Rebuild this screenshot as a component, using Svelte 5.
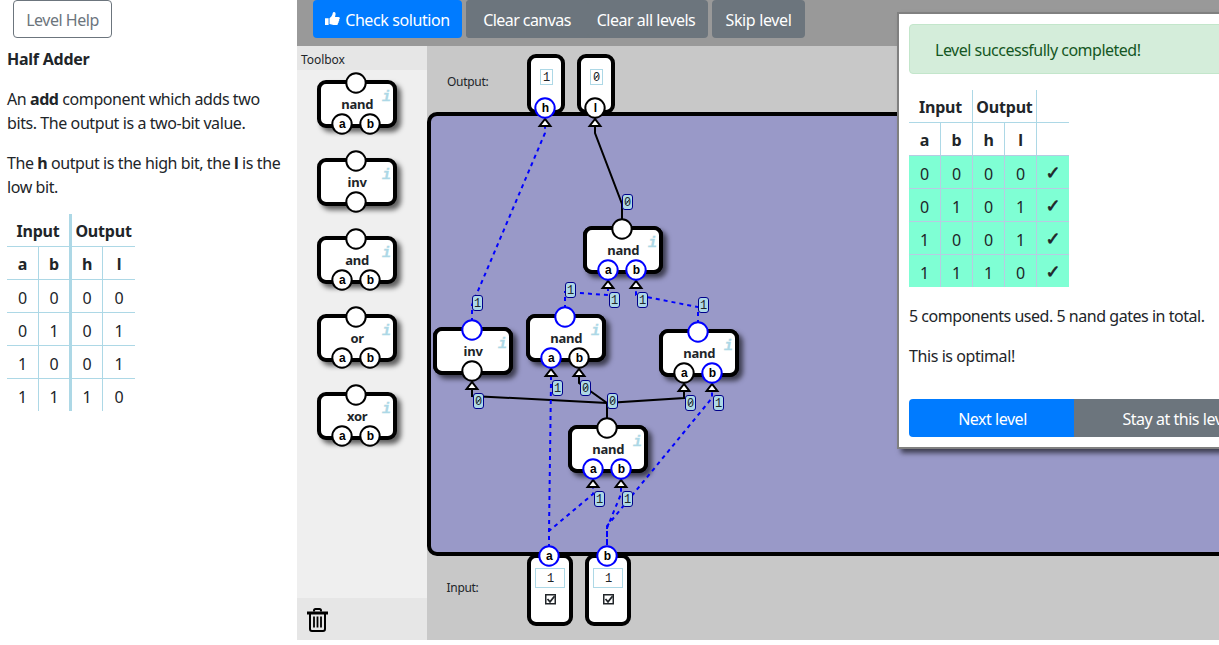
<script>
  const truth = [
    [0, 0, 0, 0],
    [0, 1, 0, 1],
    [1, 0, 0, 1],
    [1, 1, 1, 0]
  ];
  const tools = ['nand', 'inv', 'and', 'or', 'xor'];

  // Free canvas items, in the coordinate system of the canvas viewBox.
  const nodes = [
    { name: 'inv', x: 433, y: 327, out: 1, ins: [0] },
    { name: 'nand', x: 526, y: 314, out: 1, ins: [1, 0] },
    { name: 'nand', x: 583, y: 226, out: 0, ins: [1, 1] },
    { name: 'nand', x: 659, y: 329, out: 1, ins: [0, 1] },
    { name: 'nand', x: 568, y: 425, out: 0, ins: [1, 1] }
  ];
  const wires = [
    { from: [472, 330], to: [545, 108], v: 1, src: true },
    { from: [622, 229], to: [595, 108], v: 0, src: true },
    { from: [565, 317], to: [608, 270], v: 1, src: true, dst: true },
    { from: [698, 332], to: [636, 270], v: 1, src: true, dst: true },
    { from: [607, 428], to: [472, 371], v: 0, dst: true },
    { from: [607, 428], to: [579, 358], v: 0, dst: true },
    { from: [607, 428], to: [684, 373], v: 0, src: true, dst: true },
    { from: [549, 556], to: [551, 358], v: 1, dst: true },
    { from: [549, 556], to: [593, 469], v: 1, dst: true },
    { from: [607, 553], to: [621, 469], v: 1, dst: true },
    { from: [607, 551], to: [712, 373], v: 1, dst: true }
  ];
  const outputs = [{ n: 'h', x: 527, v: 1 }, { n: 'l', x: 577, v: 0 }];
  const inputs = [{ n: 'a', x: 527 }, { n: 'b', x: 585 }];
</script>

{#snippet pin(x, y, label, on)}
  <circle class="pin" class:on cx={x} cy={y} r="9.7" />
  {#if label}<text class="pinlabel" x={x + 0.3} y={y + 4}>{label}</text>{/if}
{/snippet}

{#snippet gate(name, x, y, out, ins)}
  <g transform="translate({x} {y})">
    <rect class="body" x="2" y="2" width="76" height="44" rx="7" />
    <text class="name" x="40.2" y="29">{name}</text>
    <text class="info" x="69.5" y="21">i</text>
    {@render pin(39, 3, '', out)}
    {#if ins.length === 1}
      {@render pin(39, 44, '', ins[0])}
    {:else}
      {@render pin(25, 44, 'a', ins[0])}
      {@render pin(53, 44, 'b', ins[1])}
    {/if}
  </g>
{/snippet}

{#snippet digit(x, y, v)}
  <text class="mono" {x} {y}>{v}</text>
  {#if v === 0}<path class="slash" d="M{x - 1.8} {y - 1.7}l3.600-4.800" />{/if}
{/snippet}

{#snippet badge(x, y, v)}
  <rect class="badge" x={x + 0.5} y={y + 0.5} width="10" height="15" rx="2.5" />
  {@render digit(x + 5.5, y + 12, v)}
{/snippet}

<div class="app">
  <aside class="help">
    <button class="outline">Level Help</button>
    <h1>Half Adder</h1>
    <p>An <b>add</b> component which adds two<br />bits. The output is a two-bit value.</p>
    <p>The <b>h</b> output is the high bit, the <b>l</b> is the<br />low bit.</p>
    <table class="truth">
      <colgroup><col style="width:32px" /><col style="width:33px" /><col style="width:31px" /><col style="width:32px" /></colgroup>
      <tbody>
        <tr><th colspan="2" class="thick">Input</th><th colspan="2">Output</th></tr>
        <tr><th>a</th><th class="thick">b</th><th>h</th><th>l</th></tr>
        {#each truth as row}
          <tr>{#each row as v, i}<td class:thick={i === 1}>{v}</td>{/each}</tr>
        {/each}
      </tbody>
    </table>
  </aside>

  <main>
    <div class="bar">
      <button class="primary">
        <svg width="15" height="14" viewBox="0 0 15 14"><path fill="#fff" d="M0 6.2h3.6V13H0zM4.5 6.3C6 5.2 7 3.8 7.5 2.3 7.700 1 8 .2 8.800.1c1.500-.1 2 1.200 1.700 2.700L10 5h3.500c1 0 1.500.8 1.300 1.500-.1.500-.4.8-.8.9.5.8.2 1.700-.5 2 .3.8 0 1.500-.6 1.800.2 1.200-.5 1.900-1.600 1.900H8.500c-1.500 0-2.500-.8-4-1z" /></svg>
        <span class="t1">Check solution</span>
      </button>
      <div class="group"><button class="b1">Clear canvas</button><button class="b2">Clear all levels</button></div>
      <button class="skip">Skip level</button>
    </div>
    <div class="work">
      <section class="toolbox">
        <header>Toolbox</header>
        <div class="tools">
          {#each tools as name}
            <svg class="tool" width="80" height="48">{@render gate(name, 0, 0, 0, name === 'inv' ? [0] : [0, 0])}</svg>
          {/each}
        </div>
        <footer>
          <svg width="21" height="25" viewBox="0 0 21 25" fill="none" stroke="#000">
            <path stroke-width="2" d="M7 4.500V3.500Q7 2 8.500 2h4Q14 2 14 3.500v1M3 7v15q0 2 2 2h11q2 0 2-2V7" />
            <path stroke-width="3" d="M0 6h21" />
            <path stroke-width="1.800" d="M7 9.500v11M10.500 9.500v11M14 9.500v11" />
          </svg>
        </footer>
      </section>
      <section class="canvas">
        <svg width="792" height="594" viewBox="427 46 792 594">
          <rect class="board" x="429" y="114" width="900" height="440" rx="8" />
          <text class="side" x="447" y="86">Output:</text>
          <text class="side" x="446.500" y="592">Input:</text>
          {#each outputs as o}
            <rect class="port" x={o.x + 2} y="56" width="34" height="56" rx="7" />
            <rect class="value" x={o.x + 13.5} y="69.5" width="12" height="15" />
            {@render digit(o.x + 19.5, 81, o.v)}
          {/each}
          {#each inputs as o}
            <rect class="port" x={o.x + 2} y="556" width="42" height="68" rx="7" />
            <rect class="value" x={o.x + 8.5} y="568.5" width="29" height="19" />
            {@render digit(o.x + 23.5, 582, 1)}
            <rect class="check" x={o.x + 18.75} y="594.75" width="9.500" height="9" />
            <path class="tick" d="M{o.x + 20.5} 599l2.500 2.800 4.500-5.500" />
          {/each}
          {#each nodes as n}
            <rect class="cast" x={n.x} y={n.y} width="80" height="48" rx="9" />
          {/each}
          {#each wires as w}
            <path class="wire" class:on={w.v} d="M{w.from[0]} {w.from[1]}v-25L{w.to[0]} {w.to[1] + 25}v-10" />
          {/each}
          {#each wires as w}
            <path class="arrow" d="M{w.to[0]} {w.to[1] + 11}l-5.400 7h10.800z" />
          {/each}
          {#each nodes as n}{@render gate(n.name, n.x, n.y, n.out, n.ins)}{/each}
          {@render pin(545, 108, 'h', 1)}
          {@render pin(595, 108, 'l', 0)}
          {@render pin(549, 556, 'a', 1)}
          {@render pin(607, 556, 'b', 1)}
          {#each wires as w}
            {#if w.src}{@render badge(w.from[0], w.from[1] - 35, w.v)}{/if}
            {#if w.dst}{@render badge(w.to[0] + 1, w.to[1] + 22, w.v)}{/if}
          {/each}
        </svg>
      </section>
    </div>
  </main>

  <div class="dialog">
    <div class="alert">Level successfully completed!</div>
    <table class="result">
      <tbody>
        <tr><th colspan="2">Input</th><th colspan="2">Output</th><th></th></tr>
        <tr><th>a</th><th>b</th><th>h</th><th>l</th><th></th></tr>
        {#each truth as row}
          <tr class="ok">{#each row as v}<td>{v}</td>{/each}<td class="mark">✓</td></tr>
        {/each}
      </tbody>
    </table>
    <p class="r1">5 components used. 5 nand gates in total.</p>
    <p>This is optimal!</p>
    <div class="actions"><button class="next">Next level</button><button class="stay">Stay at this level</button></div>
  </div>
</div>

<style>
  :global(body) { margin: 0; overflow: hidden; background: #fff; }
  .app { position: relative; display: flex; width: 1219px; height: 645px; overflow: hidden; font: 16px/24px 'Noto Sans', sans-serif; color: #212529; letter-spacing: -0.42px; }
  * { box-sizing: border-box; }
  button { font: inherit; letter-spacing: -.47px; height: 38px; border: 0; padding: 2px 0 0; color: #fff; background: #6c757d; white-space: nowrap; }
  .help { width: 297px; flex: none; padding-left: 7px; }
  .outline { display: block; margin-left: 6px; width: 99px; border: 1px solid #6c757d; border-radius: 4px; background: #fff; color: #6c757d; }
  h1 { font-size: 16px; line-height: 24px; margin: 9px 0 16px; letter-spacing: -.25px; }
  p { margin: 0 0 16px; white-space: nowrap; }
  .help p:last-of-type { margin-bottom: 15px; }
  table { border-collapse: separate; border-spacing: 0; table-layout: fixed; letter-spacing: -.2px; }
  td, th { height: 33px; padding: 2px 0 0; text-align: center; border-right: 1px solid lightblue; border-bottom: 1px solid lightblue; line-height: 24px; }
  td { padding-top: 3px; }
  .truth { width: 128px; }
  .truth .thick { border-right-width: 3px; }
  .truth tr > :last-child { border-right: 0; }
  tr:last-child td { border-bottom: 0; height: 32px; }
  main { flex: 1; min-width: 0; height: 640px; display: flex; flex-direction: column; }
  .bar { height: 46px; flex: none; background: #999; padding-left: 16px; display: flex; gap: 4px; }
  .bar button { border-radius: 4px; }
  .bar .primary { background: #007bff; width: 149px; display: flex; align-items: center; justify-content: center; gap: 5px; letter-spacing: -.4px; }
  .bar .primary svg { margin-top: -2px; }
  .group { width: 242px; height: 38px; display: flex; border-radius: 4px; background: #6c757d; }
  .b1 { width: 122px; letter-spacing: -.56px; }
  .b2 { width: 116px; }
  .skip { width: 93px; letter-spacing: -.35px; }
  .work { flex: 1; display: flex; min-height: 0; }
  .toolbox { width: 130px; flex: none; background: #efefef; display: flex; flex-direction: column; font-size: 12px; letter-spacing: -.05px; }
  .toolbox header { height: 24px; background: #e6e6e6; padding: 2px 0 0 4px; }
  .tools { flex: 1; display: flex; flex-direction: column; gap: 30px; padding: 10px 0 0 20px; }
  .tool { flex: none; overflow: visible; }
  .tool .body { filter: drop-shadow(4px 4px 2.500px rgba(0, 0, 0, .6)); }
  .toolbox footer { height: 42px; background: #e6e6e6; padding: 9px 0 0 9.5px; }
  .canvas { flex: 1; min-width: 0; background: #c8c8c8; }
  .canvas > svg { display: block; }
  .board { fill: #9999c8; stroke: #000; stroke-width: 4; }
  .side { font-size: 12px; fill: #212529; letter-spacing: -.3px; }
  .body, .port { fill: #fff; stroke: #000; stroke-width: 4; }
  .cast { filter: drop-shadow(4px 4px 2.500px rgba(0, 0, 0, .6)); }
  .name { font-size: 13px; font-weight: 700; text-anchor: middle; fill: #212529; letter-spacing: -.2px; }
  .info { font: italic 700 15px 'Liberation Mono', monospace; fill: lightblue; stroke: lightblue; stroke-width: .3; text-anchor: middle; letter-spacing: 0; }
  .pin { fill: #fff; stroke: #000; stroke-width: 2; }
  .pin.on, .wire.on { stroke: #00f; }
  .pinlabel { font: 700 12px 'Liberation Sans', sans-serif; text-anchor: middle; fill: #000; letter-spacing: 0; }
  .wire { fill: none; stroke: #000; stroke-width: 2; }
  .wire.on { stroke-dasharray: 4 4; }
  .arrow { fill: #fff; stroke: #000; stroke-width: 2; }
  .badge { fill: lightblue; stroke: #00008b; }
  .mono { font: 12px 'Liberation Mono', monospace; text-anchor: middle; fill: #212529; letter-spacing: 0; }
  .slash { stroke: #212529; stroke-width: .9; fill: none; }
  .value { fill: #fff; stroke: lightblue; }
  .check { fill: #fff; stroke: #212529; stroke-width: 1.5; }
  .tick { fill: none; stroke: #212529; stroke-width: 1.8; }
  .dialog { position: absolute; left: 897px; top: 12px; width: 422px; height: 437px; background: #fff; border: 2px solid gray; box-shadow: 4px 4px 5px rgba(0, 0, 0, .6); padding: 10px; }
  .alert { height: 50px; border: 1px solid #c3e6cb; border-radius: 4px; background: #d4edda; color: #155724; padding: 13px 25px; margin-bottom: 16px; letter-spacing: -.5px; }
  .result { width: 160px; margin-bottom: 17px; }
  .result tr > :last-child { border-right: 0; }
  .result tr:nth-child(2) th { border-bottom-color: #b7cbe2; }
  .ok { background: #7fffd4; }
  .ok td { border-color: #b7cbe2; }
  td.mark { font: 18px/24px 'DejaVu Sans', sans-serif; -webkit-text-stroke: .7px #212529; padding-top: 1px; }
  .r1 { letter-spacing: -.47px; }
  .actions { display: flex; margin-top: 31px; width: 400px; }
  .next { width: 165px; background: #007bff; border-radius: 4px 0 0 4px; padding-left: 2px; }
  .stay { width: 209px; }
</style>
